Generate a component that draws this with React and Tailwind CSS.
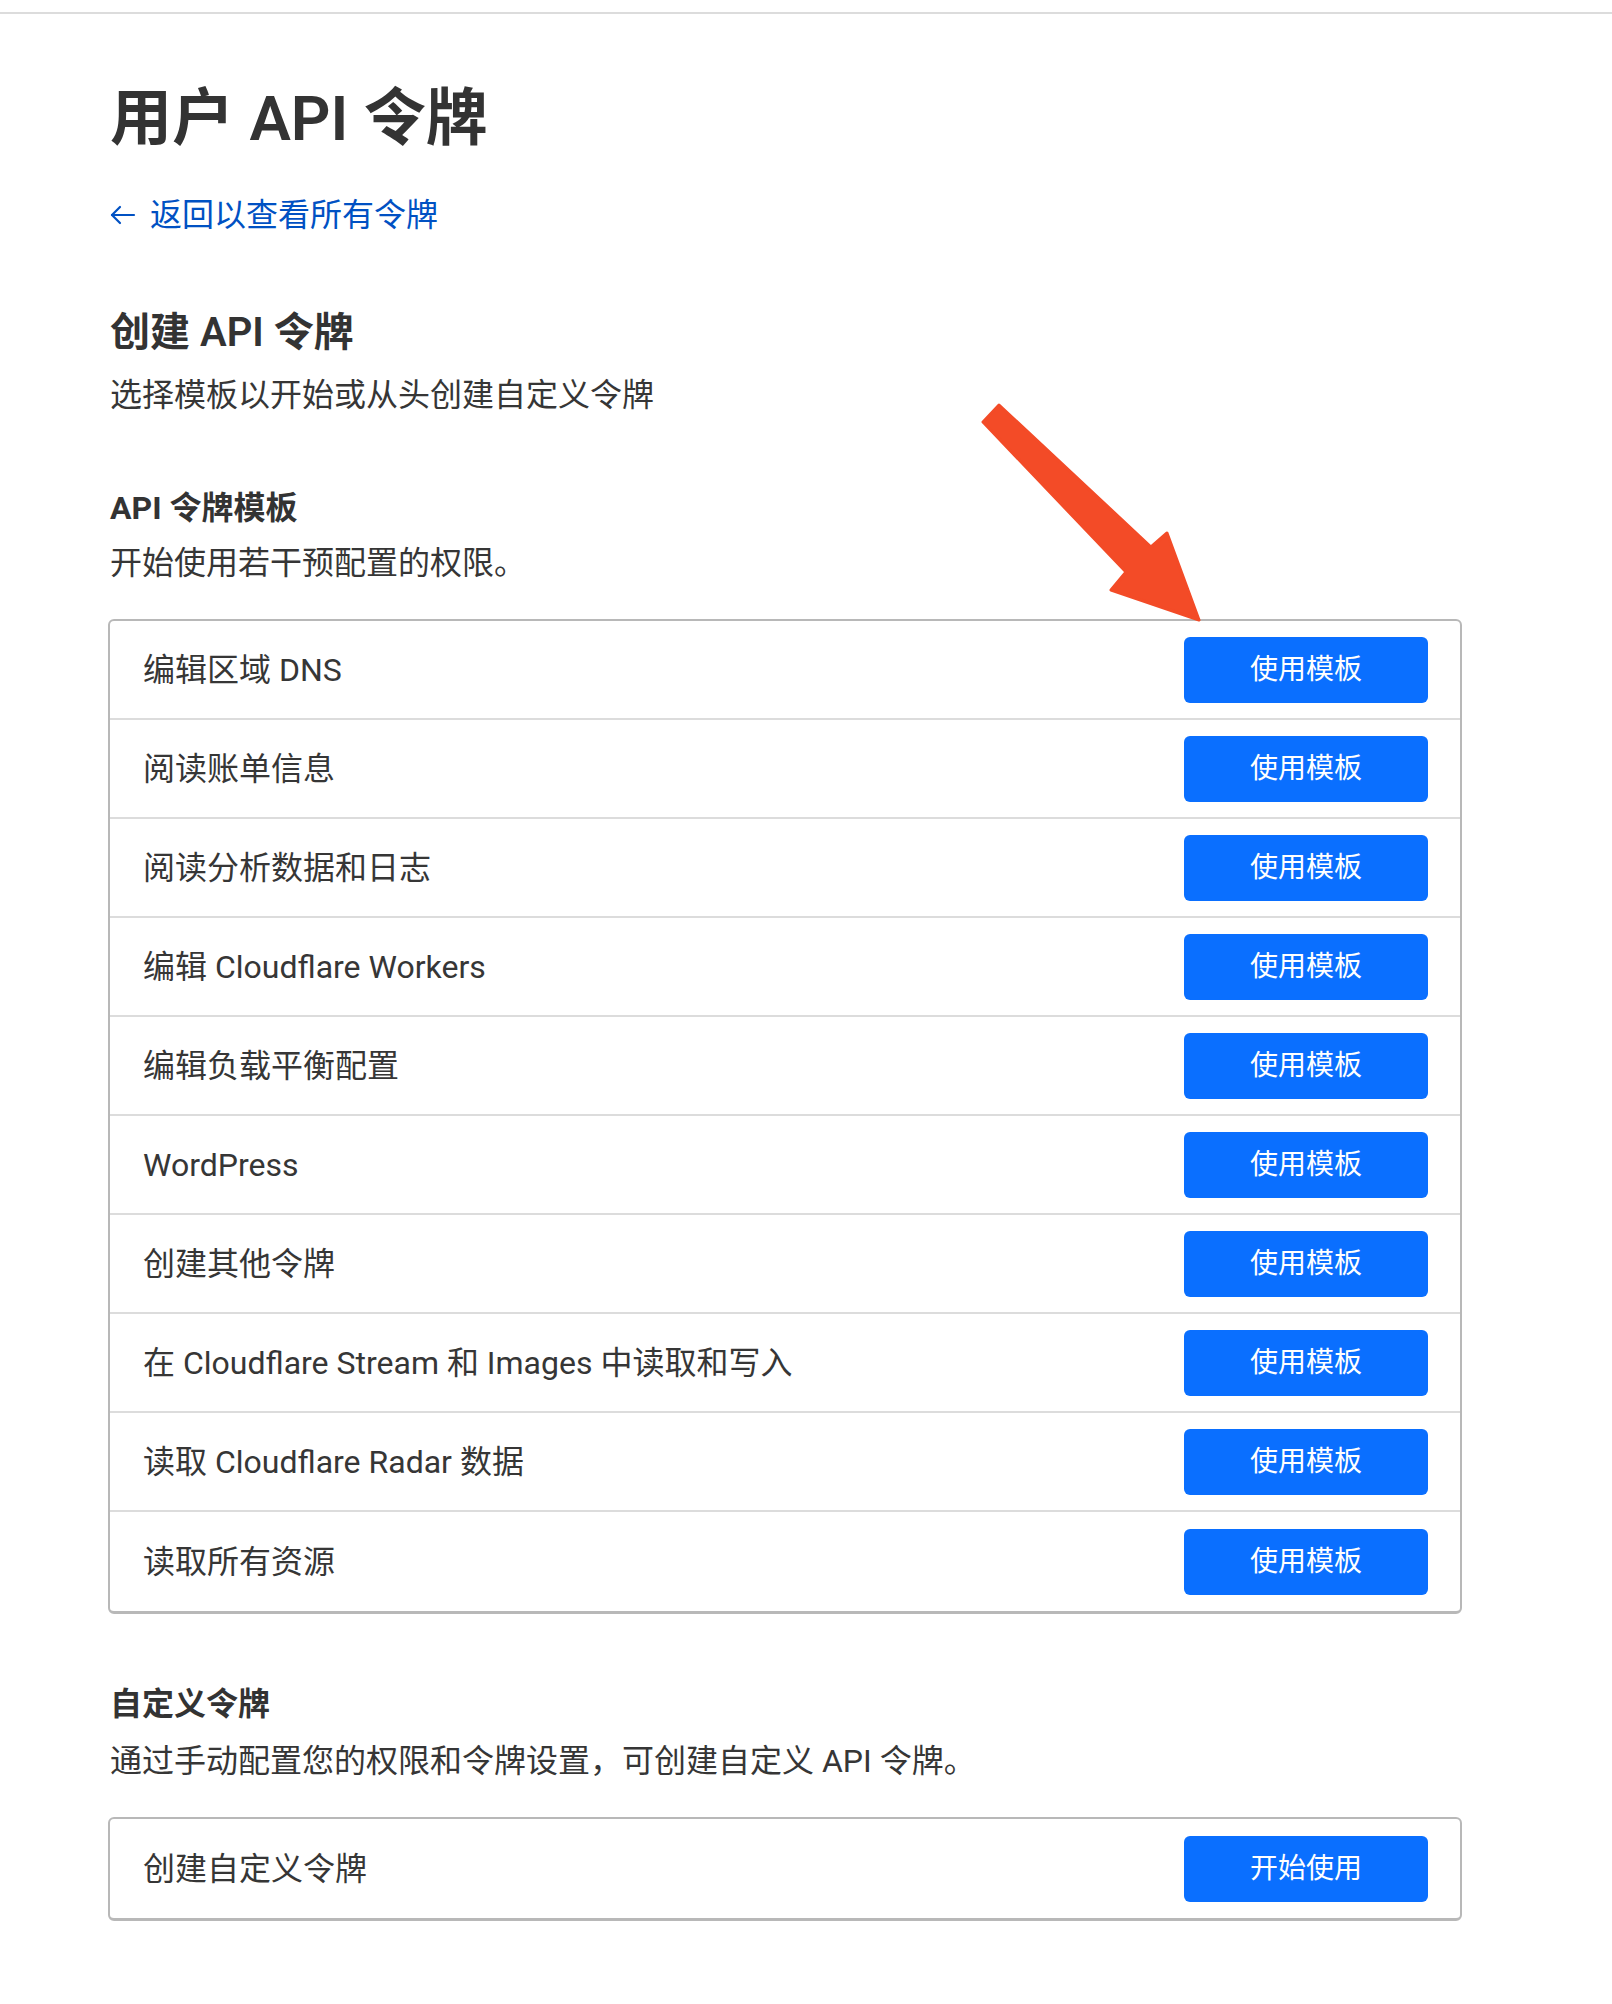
const templates = [
  "编辑区域 DNS",
  "阅读账单信息",
  "阅读分析数据和日志",
  "编辑 Cloudflare Workers",
  "编辑负载平衡配置",
  "WordPress",
  "创建其他令牌",
  "在 Cloudflare Stream 和 Images 中读取和写入",
  "读取 Cloudflare Radar 数据",
  "读取所有资源",
];

function Row({ label, action, last }) {
  return (
    <div
      className={
        "h-[99px] flex items-center justify-between pl-[33px] pr-[32px] " +
        (last ? "" : "border-b-2 border-[#dcdcdc]")
      }
    >
      <span className="text-[32px] leading-[48px] text-[#363636]">{label}</span>
      <button className="w-[244px] h-[66px] rounded-[6px] bg-[#0a6fff] text-white text-[28px] leading-none">
        {action}
      </button>
    </div>
  );
}

export default function App() {
  return (
    <div
      className="relative min-h-[2004px] w-full bg-white"
      style={{ fontFamily: 'Roboto, "Noto Sans CJK SC", sans-serif' }}
    >
      <div className="h-[14px] border-b-2 border-[#dcdcdc]"></div>

      <div className="pl-[108px] w-[1462px] flex flex-col">
        <h1 className="mt-[66px] text-[62px] leading-[77px] font-semibold text-[#333333] pl-[2px]">
          用户 API 令牌
        </h1>

        <a className="mt-[34px] flex items-center gap-[14px] text-[32px] leading-[48px] text-[#0051c3] pl-[2px]">
          <svg width="26" height="26" viewBox="0 0 26 26" fill="none" stroke="#0051c3" strokeWidth="2.2" strokeLinecap="round" strokeLinejoin="round">
            <path d="M24 13H2" />
            <path d="M10 5l-8 8 8 8" />
          </svg>
          返回以查看所有令牌
        </a>

        <h2 className="mt-[70px] text-[40px] leading-[48px] font-semibold text-[#333333] pl-[2px]">
          创建 API 令牌
        </h2>
        <p className="mt-[14px] text-[32px] leading-[48px] text-[#363636] pl-[2px]">
          选择模板以开始或从头创建自定义令牌
        </p>

        <h3 className="mt-[65px] text-[32px] leading-[48px] font-bold text-[#333333] pl-[2px]">
          API 令牌模板
        </h3>
        <p className="mt-[7px] text-[32px] leading-[48px] text-[#363636] pl-[2px]">
          开始使用若干预配置的权限。
        </p>

        <div className="mt-[32px] border-2 border-b-[3px] border-[#b8b8b8] rounded-[6px]">
          {templates.map((t, i) => (
            <Row key={t} label={t} action="使用模板" last={i === templates.length - 1} />
          ))}
        </div>

        <h3 className="mt-[66px] text-[32px] leading-[48px] font-bold text-[#333333] pl-[2px]">
          自定义令牌
        </h3>
        <p className="mt-[9px] text-[32px] leading-[48px] text-[#363636] pl-[2px]">
          通过手动配置您的权限和令牌设置，可创建自定义 API 令牌。
        </p>

        <div className="mt-[32px] border-2 border-b-[3px] border-[#b8b8b8] rounded-[6px]">
          <Row label="创建自定义令牌" action="开始使用" last />
        </div>
      </div>

      <svg
        className="absolute left-0 top-0 pointer-events-none"
        width="1612"
        height="700"
        viewBox="0 0 1612 700"
      >
        <polygon
          points="999,405 1151,547 1167,533 1199,620 1111,590 1126,572 983,422"
          fill="#f34b27"
          stroke="#f34b27"
          strokeWidth="3"
          strokeLinejoin="round"
        />
      </svg>
    </div>
  );
}
